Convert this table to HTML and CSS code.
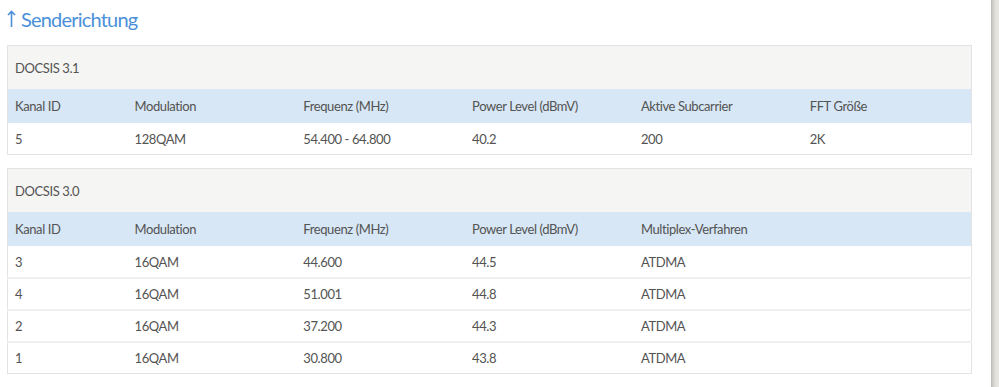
FILE: index.html
```html
<!DOCTYPE html>
<html lang="de">
<head>
<meta charset="utf-8">
<title>Senderichtung</title>
<link rel="stylesheet" href="styles.css">
</head>
<body>
<div class="page">
  <main class="content">
    <h2 class="title">
      <svg class="arrow" width="9" height="17" viewBox="0 0 9 17" aria-hidden="true">
        <path d="M4.5 1.5 V17 M1 5 L4.5 1.5 L8 5" fill="none" stroke="currentColor" stroke-width="1.6"/>
      </svg>
      <span>Senderichtung</span>
    </h2>

    <table class="chan">
      <colgroup>
        <col class="c1"><col class="cn"><col class="cn"><col class="cn"><col class="cn"><col class="cn">
      </colgroup>
      <thead>
        <tr class="cap"><th colspan="6">DOCSIS 3.1</th></tr>
        <tr class="head">
          <th>Kanal ID</th><th>Modulation</th><th>Frequenz (MHz)</th><th>Power Level (dBmV)</th><th>Aktive Subcarrier</th><th>FFT Größe</th>
        </tr>
      </thead>
      <tbody>
        <tr><td>5</td><td>128QAM</td><td>54.400 - 64.800</td><td>40.2</td><td>200</td><td>2K</td></tr>
      </tbody>
    </table>

    <table class="chan">
      <colgroup>
        <col class="c1"><col class="cn"><col class="cn"><col class="cn"><col class="cn"><col class="cn">
      </colgroup>
      <thead>
        <tr class="cap"><th colspan="6">DOCSIS 3.0</th></tr>
        <tr class="head">
          <th>Kanal ID</th><th>Modulation</th><th>Frequenz (MHz)</th><th>Power Level (dBmV)</th><th>Multiplex-Verfahren</th><th></th>
        </tr>
      </thead>
      <tbody>
        <tr><td>3</td><td>16QAM</td><td>44.600</td><td>44.5</td><td>ATDMA</td><td></td></tr>
        <tr><td>4</td><td>16QAM</td><td>51.001</td><td>44.8</td><td>ATDMA</td><td></td></tr>
        <tr><td>2</td><td>16QAM</td><td>37.200</td><td>44.3</td><td>ATDMA</td><td></td></tr>
        <tr><td>1</td><td>16QAM</td><td>30.800</td><td>43.8</td><td>ATDMA</td><td></td></tr>
      </tbody>
    </table>
  </main>
  <div class="edge"></div>
</div>
</body>
</html>
```

FILE: styles.css
```css
html, body {
  margin: 0;
  padding: 0;
  background: #ffffff;
}

body {
  font-family: Lato, "Open Sans", sans-serif;
  color: #535353;
}

.page {
  display: flex;
  height: 387px;
  overflow: hidden;
}

.content {
  flex: 1;
  padding: 0 19px 0 7px;
}

.edge {
  width: 8px;
  flex: none;
  background: linear-gradient(to right, #b9b7b1 0, #d2d0ca 2px, #e4e2dc 5px, #e9e7e1 8px);
}

.title {
  margin: 0;
  height: 45px;
  padding-top: 6px;
  box-sizing: border-box;
  display: flex;
  align-items: flex-start;
  gap: 5px;
  font-size: 20px;
  font-weight: 400;
  line-height: 26px;
  letter-spacing: -0.8px;
  color: #4a90d9;
}

.arrow {
  margin-top: 4px;
  flex: none;
}

.chan {
  width: 100%;
  border-collapse: collapse;
  table-layout: fixed;
  border: 1px solid #e3e3e3;
  font-size: 13px;
  letter-spacing: -0.4px;
  margin-bottom: 13px;
}

.c1 { width: 120px; }

.chan th,
.chan td {
  text-align: left;
  font-weight: 400;
  padding: 0 7px;
  white-space: nowrap;
}

.cap th {
  background: #f5f5f3;
  height: 43px;
}

.head th {
  background: #d7e7f5;
  height: 34px;
}

.chan td {
  height: 30px;
  border-top: 2px solid #efefef;
}

.chan tbody tr:first-child td {
  border-top: none;
  height: 31px;
}
```
